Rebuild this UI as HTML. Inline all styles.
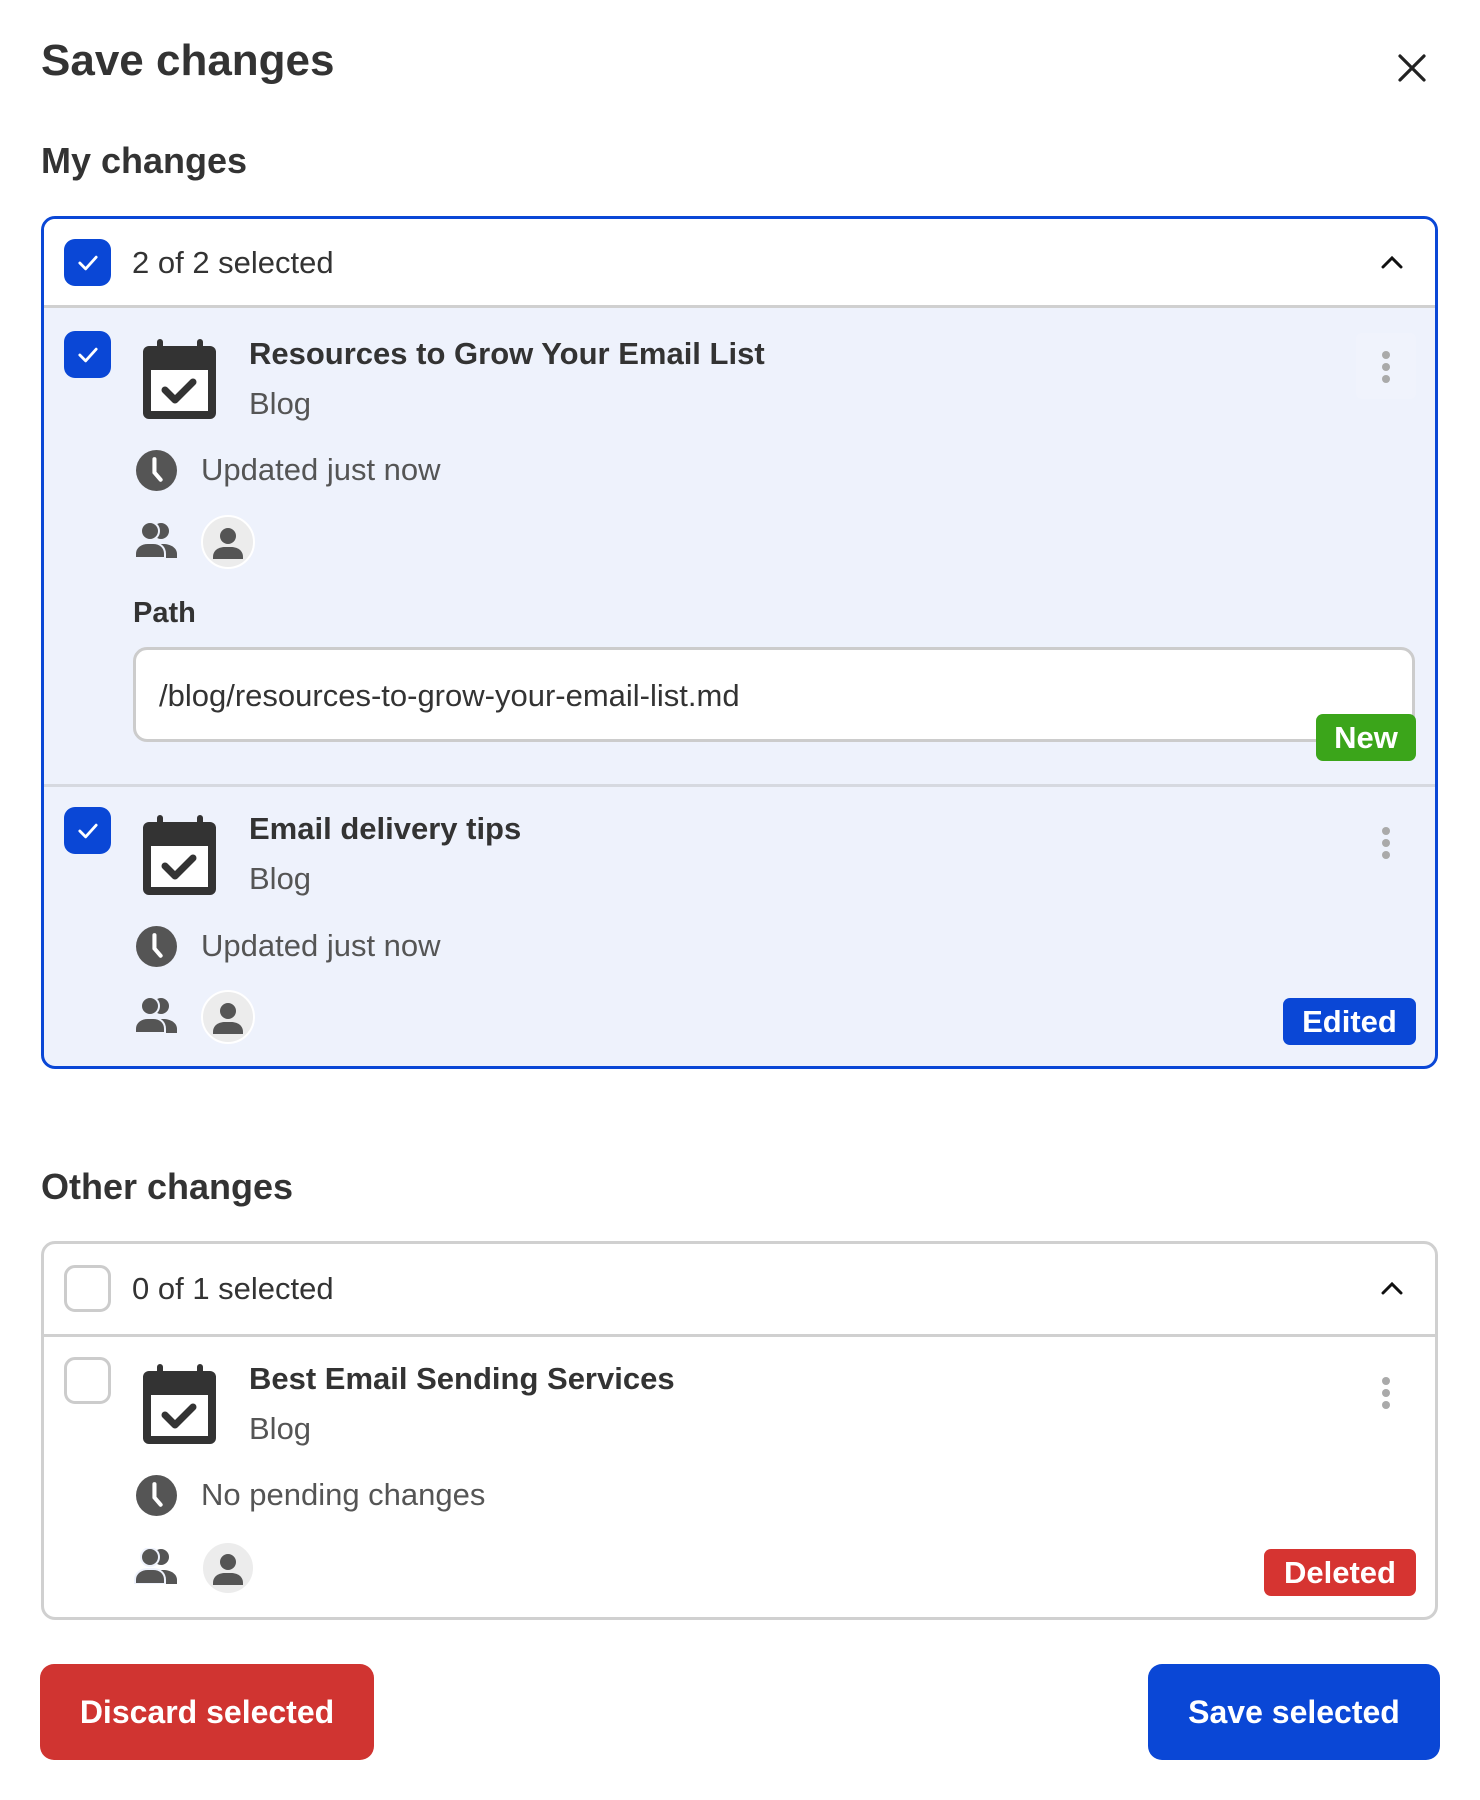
<!DOCTYPE html>
<html><head><meta charset="utf-8">
<style>
*{box-sizing:border-box;margin:0;padding:0}
body{width:1480px;height:1800px;background:#fff;font-family:"Liberation Sans",sans-serif;color:#333;position:relative;overflow:hidden}
.a{position:absolute}
.h1{font-size:44px;font-weight:bold;color:#333}
.h2{font-size:36px;font-weight:bold;color:#333}
.box{position:absolute;left:41px;width:1397px;border-radius:14px;overflow:hidden}
.cb{position:absolute;width:47px;height:47px;border-radius:11px;background:#0a47d6;display:flex;align-items:center;justify-content:center}
.cb.off{background:#fff;border:3px solid #ccc}
.ttl{position:absolute;font-size:31px;font-weight:bold;color:#333;transform:translateY(-50%);white-space:nowrap}
.sub{position:absolute;font-size:31px;color:#555;transform:translateY(-50%);white-space:nowrap}
.badge{position:absolute;color:#fff;font-weight:bold;font-size:31px;border-radius:7px;display:flex;align-items:center;justify-content:center}
.btn{position:absolute;color:#fff;font-weight:bold;font-size:32px;border-radius:14px;display:flex;align-items:center;justify-content:center}
</style></head><body>
<div class="a h1" style="left:41px;top:36px">Save changes</div>
<svg class="a" style="left:1396px;top:52px" width="32" height="32" viewBox="0 0 32 32"><path d="M4 4L28 28M28 4L4 28" stroke="#222" stroke-width="3.2" stroke-linecap="round"/></svg>
<div class="a h2" style="left:41px;top:140px">My changes</div>

<svg width="0" height="0" style="position:absolute">
<defs>
<symbol id="cal" viewBox="0 0 74 80"><rect x="14" y="0" width="6" height="12" rx="3" fill="#333"/><rect x="54" y="0" width="6" height="12" rx="3" fill="#333"/><rect x="0" y="7" width="73" height="73" rx="6" fill="#333"/><rect x="8" y="31" width="57" height="41" fill="#fff"/><path d="M22 51l10 10l18-18" stroke="#333" stroke-width="7" fill="none" stroke-linecap="round" stroke-linejoin="round"/></symbol>
<symbol id="clk" viewBox="0 0 40 40"><circle cx="20" cy="20" r="20" fill="#555"/><path d="M18 9v13l6 7" stroke="#fff" stroke-width="4" fill="none" stroke-linecap="round"/></symbol>
<symbol id="ppl" viewBox="0 0 46 36"><circle cx="28" cy="9" r="8" fill="#555"/><path d="M22 22h8c8 0 14 4 14 10v4H24z" fill="#555"/><circle cx="17" cy="9" r="9" fill="#555" stroke="#eef2fc" stroke-width="2"/><path d="M2 36v-4c0-7 6-11 13-11h5c7 0 12 4 12 11v4z" fill="#555" stroke="#eef2fc" stroke-width="2"/></symbol>
<symbol id="av" viewBox="0 0 54 54"><circle cx="27" cy="27" r="26" fill="#ececec" stroke="#fff" stroke-width="2"/><circle cx="27" cy="21" r="8" fill="#555"/><path d="M12 42c0-7 6-10 12-10h6c6 0 12 3 12 10v2H12z" fill="#555"/></symbol>
<symbol id="chk" viewBox="0 0 24 24"><path d="M5 12l5 5l9-10" stroke="#fff" stroke-width="2.4" fill="none" stroke-linecap="round" stroke-linejoin="round"/></symbol>
<symbol id="keb" viewBox="0 0 10 34"><circle cx="5" cy="5" r="4" fill="#aaa"/><circle cx="5" cy="17" r="4" fill="#aaa"/><circle cx="5" cy="29" r="4" fill="#aaa"/></symbol>
</defs></svg>

<!-- Box 1 -->
<div class="box" style="top:216px;height:853px;border:3px solid #0a47d6;background:#eef2fc">
  <div class="a" style="left:0;top:0;width:100%;height:89px;background:#fff;border-bottom:3px solid #d0d0d0"></div>
  <div class="a" style="left:0;top:565px;width:100%;height:3px;background:#d6d9e0"></div>
</div>
<div class="cb" style="left:64px;top:239px"><svg width="28" height="28"><use href="#chk"/></svg></div>
<div class="sub" style="left:132px;top:263px;color:#333;font-size:31px">2 of 2 selected</div>
<svg class="a" style="left:1380px;top:254px" width="24" height="16" viewBox="0 0 24 16"><path d="M3 13L12 4L21 13" stroke="#111" stroke-width="3" fill="none" stroke-linecap="round"/></svg>

<!-- item 1 -->
<div class="cb" style="left:64px;top:331px"><svg width="28" height="28"><use href="#chk"/></svg></div>
<svg class="a" style="left:143px;top:339px" width="74" height="80"><use href="#cal"/></svg>
<div class="ttl" style="left:249px;top:354px">Resources to Grow Your Email List</div>
<div class="sub" style="left:249px;top:404px">Blog</div>
<div class="a" style="left:1356px;top:333px;width:60px;height:66px;background:#f0f3fc;border-radius:6px"></div>
<svg class="a" style="left:1381px;top:350px" width="10" height="34"><use href="#keb"/></svg>
<svg class="a" style="left:136px;top:450px" width="41" height="41"><use href="#clk"/></svg>
<div class="sub" style="left:201px;top:470px">Updated just now</div>
<svg class="a" style="left:133px;top:522px" width="46" height="36"><use href="#ppl"/></svg>
<svg class="a" style="left:201px;top:515px" width="54" height="54"><use href="#av"/></svg>
<div class="a" style="left:133px;top:597px;font-size:29px;font-weight:bold;color:#333">Path</div>
<div class="a" style="left:133px;top:647px;width:1282px;height:95px;background:#fff;border:3px solid #ccc;border-radius:14px"></div>
<div class="sub" style="left:159px;top:696px;color:#333">/blog/resources-to-grow-your-email-list.md</div>
<div class="badge" style="left:1316px;top:714px;width:100px;height:47px;background:#3ba51a">New</div>

<!-- item 2 -->
<div class="cb" style="left:64px;top:807px"><svg width="28" height="28"><use href="#chk"/></svg></div>
<svg class="a" style="left:143px;top:815px" width="74" height="80"><use href="#cal"/></svg>
<div class="ttl" style="left:249px;top:829px">Email delivery tips</div>
<div class="sub" style="left:249px;top:879px">Blog</div>
<svg class="a" style="left:1381px;top:826px" width="10" height="34"><use href="#keb"/></svg>
<svg class="a" style="left:136px;top:926px" width="41" height="41"><use href="#clk"/></svg>
<div class="sub" style="left:201px;top:946px">Updated just now</div>
<svg class="a" style="left:133px;top:997px" width="46" height="36"><use href="#ppl"/></svg>
<svg class="a" style="left:201px;top:990px" width="54" height="54"><use href="#av"/></svg>
<div class="badge" style="left:1283px;top:998px;width:133px;height:47px;background:#0a47d6">Edited</div>

<div class="a h2" style="left:41px;top:1166px">Other changes</div>

<!-- Box 2 -->
<div class="box" style="top:1241px;height:379px;border:3px solid #d0d0d0;background:#fff">
  <div class="a" style="left:0;top:0;width:100%;height:93px;border-bottom:3px solid #d0d0d0"></div>
</div>
<div class="cb off" style="left:64px;top:1265px"></div>
<div class="sub" style="left:132px;top:1289px;color:#333">0 of 1 selected</div>
<svg class="a" style="left:1380px;top:1280px" width="24" height="16" viewBox="0 0 24 16"><path d="M3 13L12 4L21 13" stroke="#111" stroke-width="3" fill="none" stroke-linecap="round"/></svg>
<div class="cb off" style="left:64px;top:1357px"></div>
<svg class="a" style="left:143px;top:1364px" width="74" height="80"><use href="#cal"/></svg>
<div class="ttl" style="left:249px;top:1379px">Best Email Sending Services</div>
<div class="sub" style="left:249px;top:1429px">Blog</div>
<svg class="a" style="left:1381px;top:1376px" width="10" height="34"><use href="#keb"/></svg>
<svg class="a" style="left:136px;top:1475px" width="41" height="41"><use href="#clk"/></svg>
<div class="sub" style="left:201px;top:1495px">No pending changes</div>
<svg class="a" style="left:133px;top:1548px" width="46" height="36"><use href="#ppl"/></svg>
<svg class="a" style="left:201px;top:1541px" width="54" height="54"><use href="#av"/></svg>
<div class="badge" style="left:1264px;top:1549px;width:152px;height:47px;background:#d63431">Deleted</div>

<div class="btn" style="left:40px;top:1664px;width:334px;height:96px;background:#d03431">Discard selected</div>
<div class="btn" style="left:1148px;top:1664px;width:292px;height:96px;background:#0a47d6">Save selected</div>
</body></html>
